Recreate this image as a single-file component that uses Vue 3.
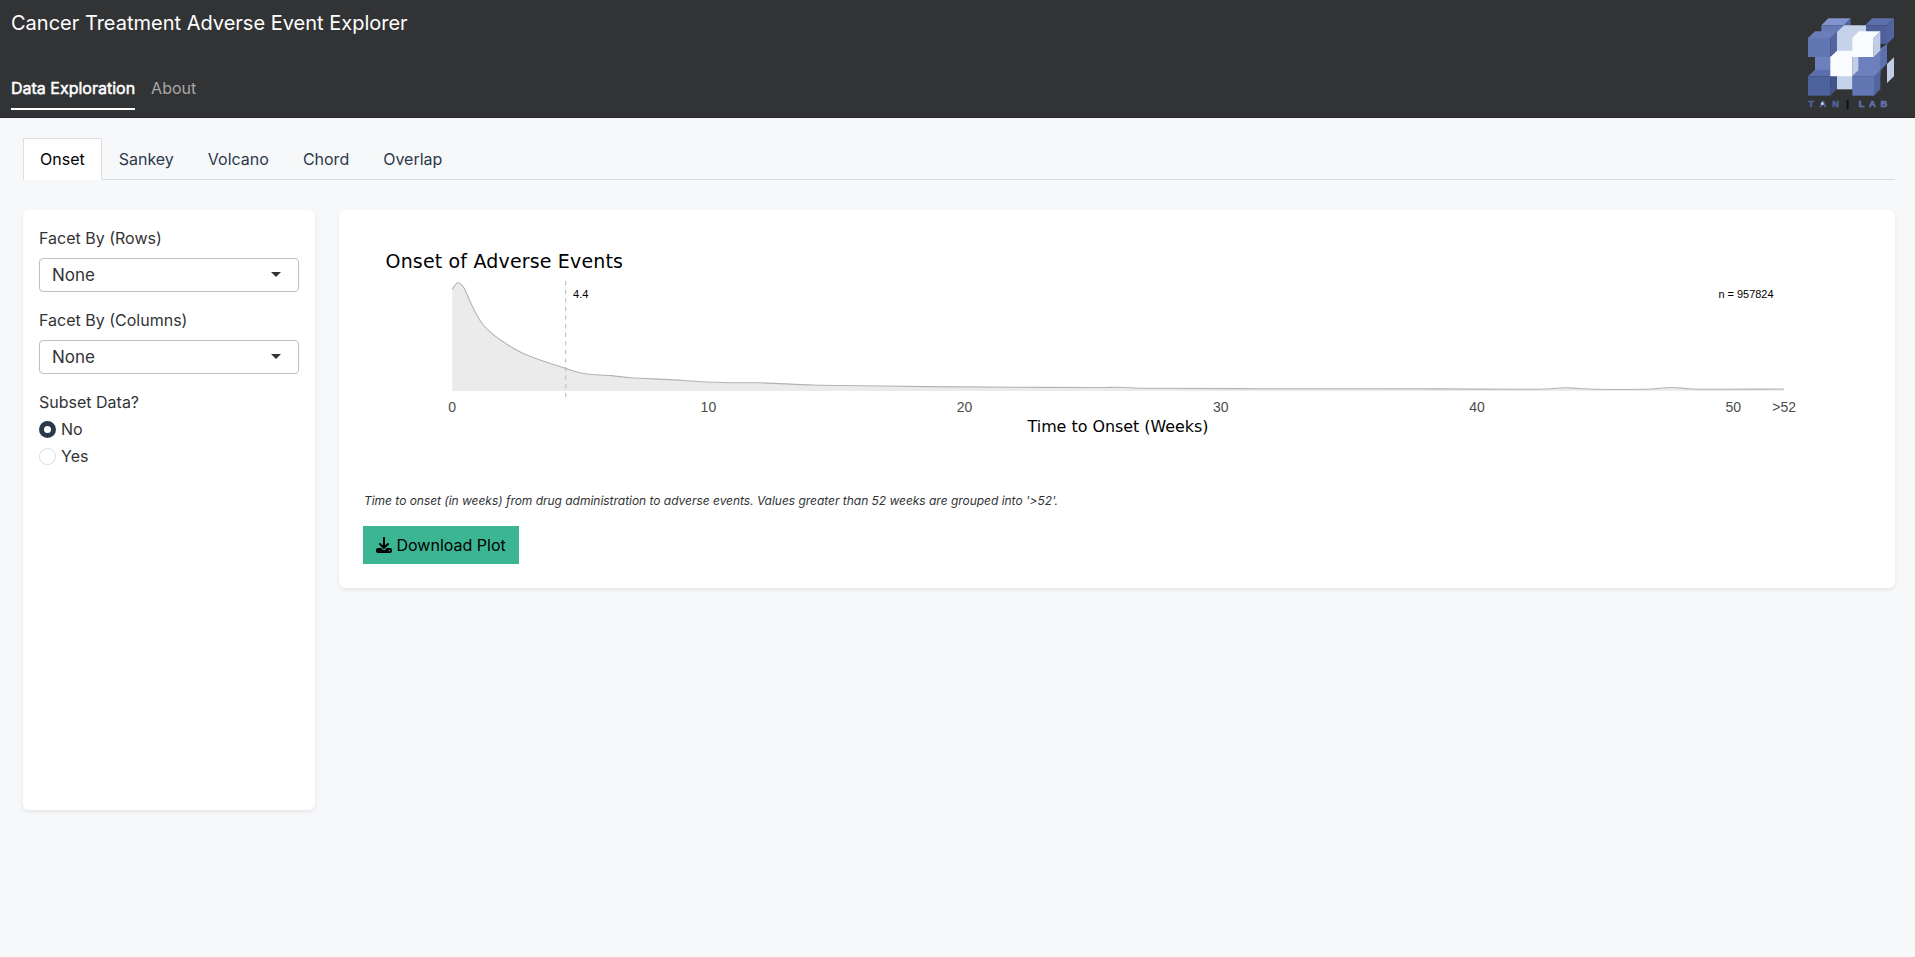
<script setup>
import { ref } from 'vue'

const pages = ['Data Exploration', 'About']
const page = ref('Data Exploration')
const tabs = ['Onset', 'Sankey', 'Volcano', 'Chord', 'Overlap']
const tab = ref('Onset')
const facets = ['Facet By (Rows)', 'Facet By (Columns)']
const subset = ref('No')

const curve = [
  [113.2, 79.3], [119, 72.7], [125, 78], [131, 91.3], [137.7, 104.8], [144.3, 115], [154.3, 124.7],
  [164.3, 131.8], [174.3, 138.3], [184.3, 143.4], [201, 150],
  [221, 156.5], [233, 160.5], [241, 162.8], [248, 164], [260, 165], [272.7, 165.6], [291, 167.8], [331, 169.6],
  [359, 171.5], [390, 172.7], [420.5, 172.8], [474, 175], [524, 175.7], [589, 176.6],
  [704, 177.4], [765, 177.5], [780, 177.2], [803, 178.2], [921, 178.7], [1100, 178.9],
  [1197, 179.3], [1212, 178.7], [1226, 177.7], [1240, 178.5], [1255, 179.3], [1305, 179.3],
  [1319, 178.5], [1333, 177.5], [1348, 178.6], [1364, 179.3], [1445, 179]
]

// Catmull-Rom interpolation through the density samples
function smooth(p) {
  let d = `M${p[0]}`
  for (let i = 0; i < p.length - 1; i++) {
    const a = p[Math.max(i - 1, 0)], b = p[i], c = p[i + 1], e = p[Math.min(i + 2, p.length - 1)]
    const w = c[0] - b[0]
    const m1 = i === 0 ? -1.6 : i === 1 ? 0 : (c[1] - a[1]) / (c[0] - a[0])
    const m2 = i === 0 ? 0 : (e[1] - b[1]) / (e[0] - b[0])
    d += ` C${b[0] + w / 3},${b[1] + (w * m1) / 3} ${c[0] - w / 3},${c[1] - (w * m2) / 3} ${c}`
  }
  return d
}
const line = smooth(curve)
const area = `${line} L1445,181 L113.2,181 Z`
const ticks = [[113.2, '0'], [369.4, '10'], [625.6, '20'], [881.8, '30'], [1138, '40'], [1394.2, '50'], [1445.2, '>52']]
</script>

<template>
  <div class="app">
    <header class="navbar">
      <div class="nav-left">
        <div class="brand">Cancer Treatment Adverse Event Explorer</div>
        <nav class="nav">
          <a v-for="p in pages" :key="p" class="nav-link" :class="{ active: p === page }" @click="page = p">{{ p }}</a>
        </nav>
      </div>
      <svg class="logo" viewBox="0 0 375 351">
        <path fill="#6d80bd" d="M75 168H135V212H75Z" />
        <path fill="#8294cf" d="M94 76L115 55H182L162 76Z" />
        <path fill="#6579b7" d="M94 76H160V110H94Z" />
        <path fill="#53659f" d="M162 76L182 55V78H160Z" />
        <path fill="#5b6fac" d="M226 76L246 55H312L291 76Z" />
        <path fill="#4d6099" d="M226 76H291V132H226Z" />
        <path fill="#53659f" d="M291 76L312 55V112L291 132Z" />
        <path fill="#6d80bd" d="M187 170H271V229H187Z" />
        <path fill="#6d80bd" d="M252 160L291 132V190L252 229Z" />
        <path fill="#5d70ae" d="M271 153L291 132V190L271 212Z" />
        <path fill="#c6d2e9" d="M141 96L162 76H228V96H207V153H141Z" />
        <path fill="#6c7eba" d="M54 114L75 94H141L121 114Z" />
        <path fill="#6276b4" d="M54 114H121V171H54Z" />
        <path fill="#52659f" d="M121 114L141 94V152L121 171Z" />
        <path fill="#fafbfe" d="M187 114L207 94H271L251 114V171H187Z" />
        <path fill="#c1cce6" d="M251 114L271 94V151L251 171Z" />
        <path fill="#5b6fae" d="M54 229L75 209H141L121 229Z" />
        <path fill="#4e629d" d="M54 229H121V287H54Z" />
        <path fill="#41558c" d="M121 229L141 209V267L121 287Z" />
        <path fill="#c6d2e9" d="M141 228H188V268H141Z" />
        <path fill="#fafbfe" d="M121 171L141 152H207L187 171V229H121Z" />
        <path fill="#c1cce6" d="M187 171H205V211L187 229Z" />
        <path fill="#6e80bd" d="M187 229L207 209H271L252 229Z" />
        <path fill="#6276b4" d="M187 229H252V287H187Z" />
        <path fill="#53659f" d="M252 229L271 210V268L252 287Z" />
        <path fill="#c1cce6" d="M291 192L312 172V229L291 249Z" />
        <g class="logo-text">
          <text x="55" y="321" textLength="92">TAN</text>
          <text x="169" y="321" class="bar">|</text>
          <text x="206" y="321" textLength="86" class="lab">LAB</text>
        </g>
        <circle cx="97" cy="311" r="4" fill="#d6e0f5" />
      </svg>
    </header>

    <main class="content">
      <ul class="tabs">
        <li v-for="t in tabs" :key="t" class="tab" :class="{ active: t === tab }" @click="tab = t">{{ t }}</li>
      </ul>
      <div class="columns">
        <aside class="card sidebar">
          <div v-for="f in facets" :key="f" class="field">
            <div class="label">{{ f }}</div>
            <div class="select"><span>None</span><i class="caret"></i></div>
          </div>
          <div class="label subset">Subset Data?</div>
          <div v-for="o in ['No', 'Yes']" :key="o" class="radio" @click="subset = o">
            <i class="dot" :class="{ checked: o === subset }"></i><span>{{ o }}</span>
          </div>
        </aside>
        <section class="card main">
          <svg class="plot" width="1556" height="260" viewBox="0 0 1556 260">
            <text x="46.5" y="58" class="title" textLength="237.500">Onset of Adverse Events</text>
            <path :d="area" fill="#ebebeb" />
            <path :d="line" fill="none" stroke="#b3b3b3" stroke-width="1.1" />
            <path d="M226.7 71V187" stroke="#bebebe" stroke-width="1.1" stroke-dasharray="4.4 4.2" />
            <text x="234" y="88" class="note" textLength="15.5" lengthAdjust="spacingAndGlyphs">4.4</text>
            <text x="1379.5" y="88" class="note" textLength="55" lengthAdjust="spacingAndGlyphs">n = 957824</text>
            <text v-for="[x, t] in ticks" :key="t" :x="x" y="202" class="tick">{{ t }}</text>
            <text x="688.5" y="221.500" class="axis" textLength="181" lengthAdjust="spacingAndGlyphs">Time to Onset (Weeks)</text>
          </svg>
          <p class="caption">Time to onset (in weeks) from drug administration to adverse events. Values greater than 52 weeks are grouped into '&gt;52'.</p>
          <button class="download">
            <svg width="16" height="16" viewBox="0 0 512 512"><path d="M288 32c0-17.700-14.300-32-32-32s-32 14.300-32 32v242.700l-73.400-73.400c-12.500-12.500-32.800-12.500-45.300 0s-12.500 32.800 0 45.300l128 128c12.500 12.500 32.800 12.500 45.300 0l128-128c12.500-12.500 12.500-32.800 0-45.300s-32.800-12.500-45.300 0L288 274.700V32zM64 352c-35.300 0-64 28.700-64 64v32c0 35.300 28.700 64 64 64h384c35.300 0 64-28.700 64-64v-32c0-35.300-28.700-64-64-64H346.500l-45.300 45.300c-25 25-65.500 25-90.500 0L165.500 352H64zm368 56a24 24 0 1 1 0 48 24 24 0 1 1 0-48z" /></svg>
            <span>Download Plot</span>
          </button>
        </section>
      </div>
    </main>
  </div>
</template>

<style>
body { background: #f7f8fa; }
</style>

<style scoped>
.app { min-height: 957px; background: #f7f8fa; font-family: Inter, sans-serif; font-size: 16px; line-height: 24px; color: #323335; }
.navbar { box-sizing: border-box; height: 118px; display: flex; justify-content: space-between; background: #323335; border-bottom: 1px solid #2b2529; }
.nav-left { padding: 8px 0 0 11px; }
.brand { font-size: 20px; line-height: 30px; color: #fff; }
.nav { display: flex; gap: 16px; margin-top: 35px; }
.nav-link { height: 35px; padding-top: 3px; box-sizing: border-box; color: #a7a7a8; }
.nav-link.active { height: 37px; color: #fff; -webkit-text-stroke: 0.5px #fff; border-bottom: 2px solid #fff; }
.logo { width: 125px; height: 117px; }
.logo-text { font: bold 28px "Liberation Sans", sans-serif; fill: #50639b; stroke: #50639b; stroke-width: 1.8px; }
.logo-text .lab { fill: #6073ae; stroke: #6073ae; }
.logo-text .bar { fill: #0d0f18; stroke: #0d0f18; }
.content { padding: 20px 20px 0 23px; }
.tabs { display: flex; list-style: none; margin: 0; padding: 0; height: 41px; border-bottom: 1px solid #dbdde0; }
.tab { box-sizing: border-box; height: 42px; padding: 8px 16px; border: 1px solid transparent; color: #2b3a4a; }
.tab.active { background: #fff; color: #000; border-color: #dbdde0 #dbdde0 #fff; }
.columns { display: grid; grid-template-columns: 292px 1fr; gap: 24px; margin-top: 30px; align-items: start; }
.card { background: #fff; border-radius: 6px; box-shadow: 0 2px 4px rgba(0, 0, 0, 0.075); box-sizing: border-box; }
.sidebar { height: 600px; padding: 16px; }
.field { margin-bottom: 16px; }
.label { height: 24px; margin-bottom: 8px; }
.select { box-sizing: border-box; height: 34px; border: 1px solid #bfbfbf; border-radius: 4px; padding: 0 17px 0 12px; display: flex; align-items: center; justify-content: space-between; font-size: 17px; }
.caret { border: 5px solid transparent; border-top-color: #323335; border-bottom: 0; margin-top: -1px; }
.subset { margin-bottom: 3px; }
.radio { display: flex; align-items: center; gap: 5px; height: 24px; margin-bottom: 3px; }
.dot { box-sizing: border-box; width: 17px; height: 17px; border: 1px solid #dbdde2; border-radius: 50%; }
.dot.checked { border: 5px solid #2b3a4a; }
.main { height: 378px; display: flex; flex-direction: column; align-items: flex-start; }
.plot { display: block; }
.title { font: 19px "DejaVu Sans", sans-serif; fill: #000; }
.note { font: 11px "Liberation Sans", sans-serif; fill: #000; }
.tick { font: 14px "Liberation Sans", sans-serif; fill: #4d4d4d; text-anchor: middle; }
.axis { font: 16px "DejaVu Sans", sans-serif; fill: #000; }
.caption { margin: 21px 0 0 25px; font-size: 12px; line-height: 20px; font-style: italic; letter-spacing: -0.025px; }
.download { margin: 15px 0 0 24px; width: 156px; height: 38px; padding: 0 0 0 13px; display: flex; align-items: center; gap: 4.5px; border: 0; background: #3cb592; font: 16px Inter, sans-serif; color: #000; white-space: nowrap; }
</style>
